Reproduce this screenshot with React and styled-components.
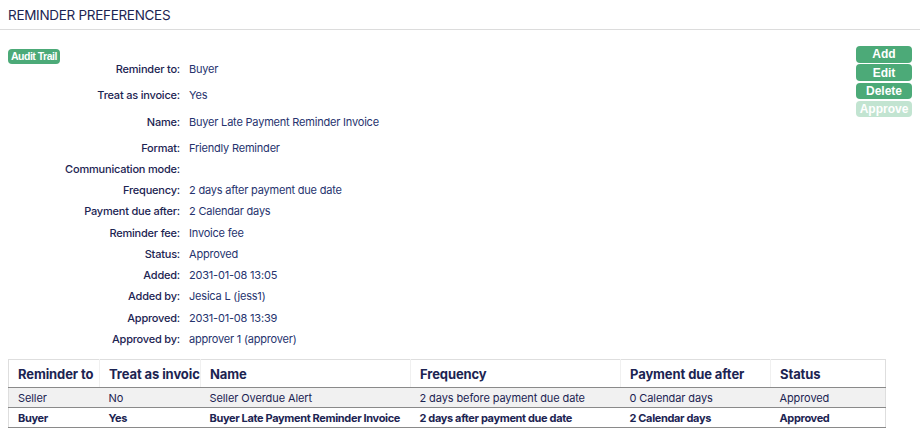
import React from 'react';
import styled, { createGlobalStyle } from 'styled-components';

const navy = '#1c2452';
const valueBlue = '#26336e';
const green = '#4caa78';

const GlobalStyle = createGlobalStyle`
  html, body {
    margin: 0;
    padding: 0;
    background: #fff;
    font-family: Inter, "Noto Sans", sans-serif;
    color: ${navy};
  }
`

const Page = styled.div`
  width: 920px;
  min-height: 439px;
`

const TitleBar = styled.div`
  height: 30px;
  border-bottom: 1px solid #dcdcdc;
  display: flex;
  align-items: flex-end;
  padding: 0 8px 6px;
  box-sizing: border-box;
`

const Title = styled.h1`
  margin: 0;
  font-size: 13.5px;
  font-weight: 400;
  letter-spacing: -0.3px;
  color: ${navy};
  text-transform: uppercase;
`

const Body = styled.div`
  display: flex;
  justify-content: space-between;
  padding: 14px 8px 0 8px;
`

const Details = styled.div`
  display: flex;
  flex-direction: column;
`

const AuditBar = styled.div`
  height: 9px;
  position: relative;
  z-index: 1;
`

const SmallButton = styled.button`
  font-family: "Liberation Sans", Arial, sans-serif;
  font-weight: 700;
  font-size: ${p => p.$size || 12}px;
  letter-spacing: ${p => p.$spacing || 0}px;
  color: #fff;
  background: ${p => (p.disabled ? '#c2e4d1' : green)};
  border: none;
  border-radius: 4px;
  padding: 0 ${p => p.$pad ?? 3}px;
  height: ${p => p.$height || 16.5}px;
  width: ${p => (p.$width ? p.$width + 'px' : 'auto')};
  line-height: 1;
  cursor: ${p => (p.disabled ? 'default' : 'pointer')};
`

const Row = styled.div`
  display: grid;
  grid-template-columns: 172px 1fr;
  column-gap: 9px;
  align-items: center;
  height: ${p => (p.$tall ? 26.3 : 21.25)}px;
  padding-top: ${p => (p.$tall ? 5.6 : 0)}px;
  box-sizing: border-box;
  font-size: 11px;
  letter-spacing: -0.2px;
`

const Label = styled.span`
  text-align: right;
  font-weight: 500;
  color: ${navy};
  white-space: nowrap;
`

const Value = styled.span`
  color: ${valueBlue};
  white-space: nowrap;
`

const ActionColumn = styled.div`
  display: flex;
  flex-direction: column;
  gap: 1.8px;
  padding-top: 2px;
`

const TableWrap = styled.div`
  padding: 10px 8px 0 8px;
`

const Table = styled.table`
  width: 877px;
  border-collapse: collapse;
  table-layout: fixed;
  border: 1px solid #dedede;
  font-size: 11px;
`

const Th = styled.th`
  height: 27px;
  text-align: left;
  font-size: 13px;
  font-weight: 700;
  color: ${navy};
  padding: 0 0 0 9px;
  white-space: nowrap;
  overflow: hidden;
  border-bottom: 1px solid #8a8a8a;
  border-left: ${p => (p.$first ? 'none' : '1px solid #f0f0f0')};
  letter-spacing: -0.1px;
`

const Tr = styled.tr`
  background: ${p => (p.$shaded ? '#f1f1f1' : '#fff')};
  font-weight: ${p => (p.$bold ? 700 : 400)};
  letter-spacing: ${p => (p.$bold ? -0.35 : -0.1)}px;
`

const Td = styled.td`
  height: 19px;
  padding: 0 0 0 9px;
  color: ${navy};
  border-bottom: 1px solid #8a8a8a;
  white-space: nowrap;
  overflow: hidden;
`

const details = [
  ['Reminder to:', 'Buyer', true],
  ['Treat as invoice:', 'Yes', true],
  ['Name:', 'Buyer Late Payment Reminder Invoice', true],
  ['Format:', 'Friendly Reminder', true],
  ['Communication mode:', ''],
  ['Frequency:', '2 days after payment due date'],
  ['Payment due after:', '2 Calendar days'],
  ['Reminder fee:', 'Invoice fee'],
  ['Status:', 'Approved'],
  ['Added:', '2031-01-08 13:05'],
  ['Added by:', 'Jesica L (jess1)'],
  ['Approved:', '2031-01-08 13:39'],
  ['Approved by:', 'approver 1 (approver)'],
];

const columns = [
  ['Reminder to', 91],
  ['Treat as invoice', 101],
  ['Name', 210],
  ['Frequency', 210],
  ['Payment due after', 150],
  ['Status', 115],
];

const rows = [
  { cells: ['Seller', 'No', 'Seller Overdue Alert', '2 days before payment due date', '0 Calendar days', 'Approved'], shaded: true },
  { cells: ['Buyer', 'Yes', 'Buyer Late Payment Reminder Invoice', '2 days after payment due date', '2 Calendar days', 'Approved'], bold: true },
];

const App = () => {
  return (
    <Page>
      <GlobalStyle />
      <TitleBar>
        <Title>Reminder Preferences</Title>
      </TitleBar>
      <Body>
        <Details>
          <AuditBar>
            <SmallButton $size={10.5} $spacing={-0.5} $pad={3} $height={15}>Audit Trail</SmallButton>
          </AuditBar>
          {details.map(([label, value, tall]) => (
            <Row key={label} $tall={tall}>
              <Label>{label}</Label>
              <Value>{value}</Value>
            </Row>
          ))}
        </Details>
        <ActionColumn>
          <SmallButton $width={56}>Add</SmallButton>
          <SmallButton $width={56}>Edit</SmallButton>
          <SmallButton $width={56}>Delete</SmallButton>
          <SmallButton $width={56} disabled>Approve</SmallButton>
        </ActionColumn>
      </Body>
      <TableWrap>
        <Table>
          <colgroup>
            {columns.map(([name, w]) => (
              <col key={name} style={{ width: w }} />
            ))}
          </colgroup>
          <thead>
            <tr>
              {columns.map(([name], i) => (
                <Th key={name} $first={i === 0}>{name}</Th>
              ))}
            </tr>
          </thead>
          <tbody>
            {rows.map((r, i) => (
              <Tr key={i} $shaded={r.shaded} $bold={r.bold}>
                {r.cells.map((c, j) => (
                  <Td key={j}>{c}</Td>
                ))}
              </Tr>
            ))}
          </tbody>
        </Table>
      </TableWrap>
    </Page>
  );
}

export default App;
